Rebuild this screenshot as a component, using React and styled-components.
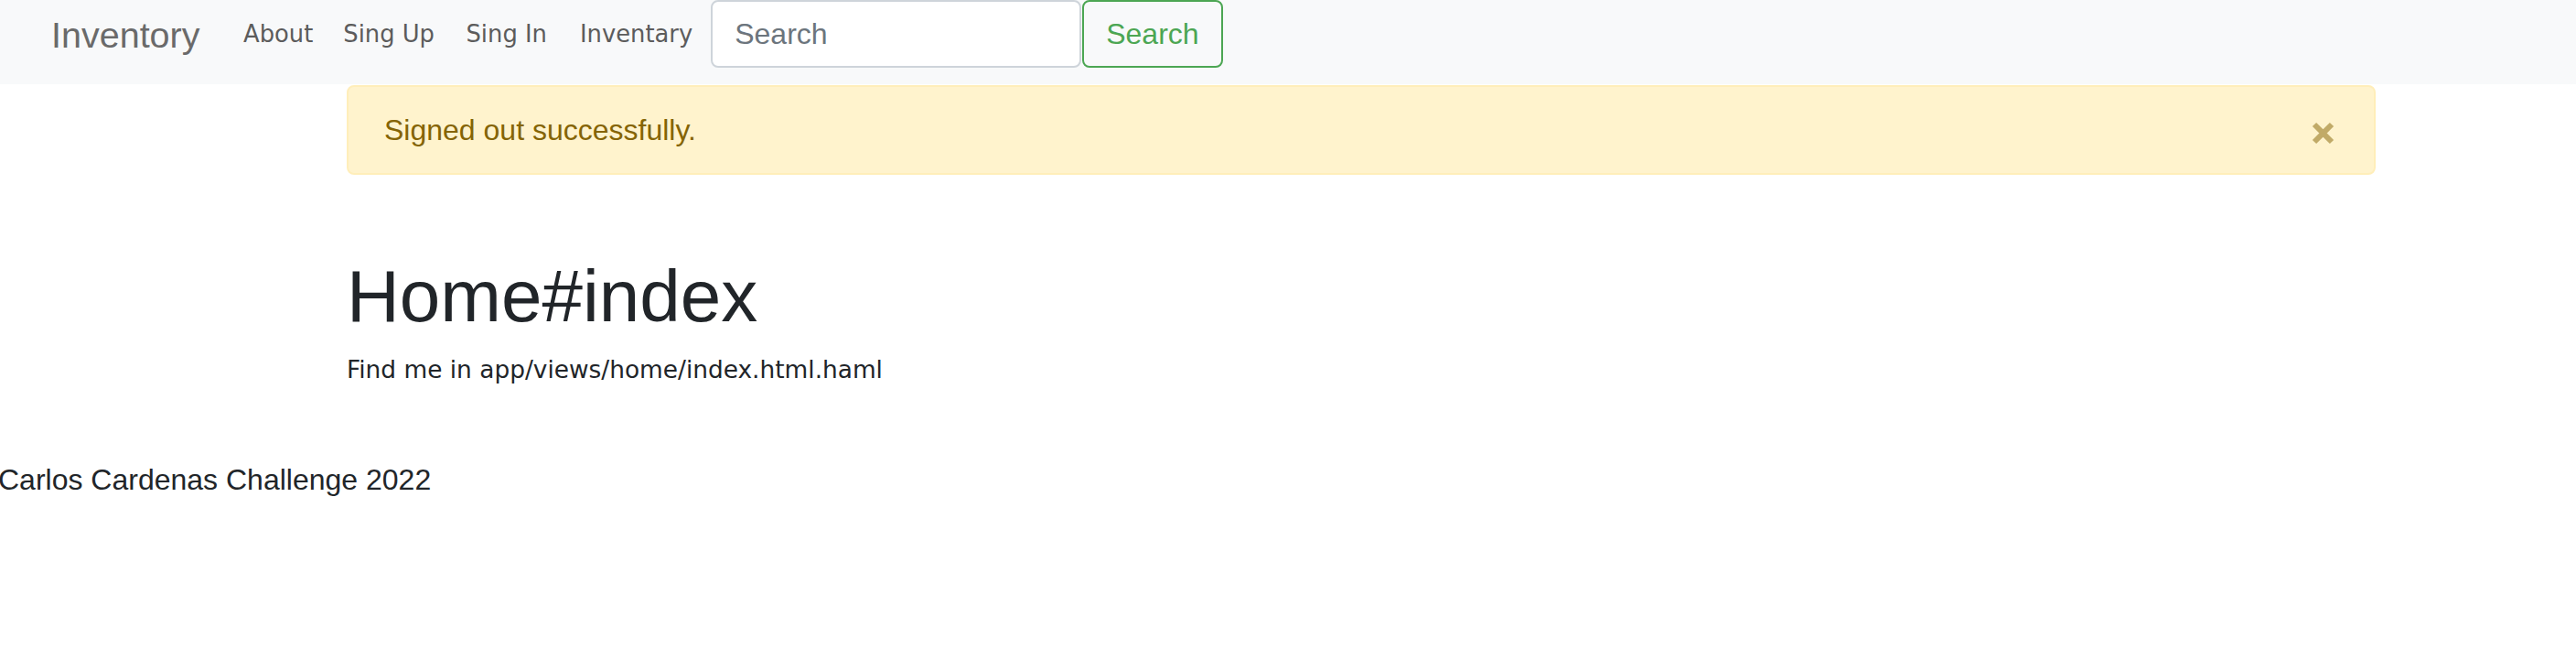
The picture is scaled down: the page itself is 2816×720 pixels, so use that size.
import styled, { createGlobalStyle } from "styled-components";

const GlobalStyle = createGlobalStyle`
  body {
    margin: 0;
    background: #fff;
    font-family: "Liberation Sans", Arial, sans-serif;
    color: #212529;
  }
`;

const Navbar = styled.nav`
  display: flex;
  align-items: flex-start;
  height: 92px;
  padding-left: 56px;
  background-color: #f8f9fa;
  box-sizing: border-box;
`;

const Brand = styled.a`
  margin-top: 15px;
  margin-right: 31px;
  font-size: 39.5px;
  line-height: 46px;
  color: #6a6a6a;
  text-decoration: none;
`;

const NavList = styled.ul`
  display: flex;
  margin: 0;
  padding: 0;
  list-style: none;
`;

/* the reference font has a wider capital I than DejaVu, so those links get a bit more room */
const NavLink = styled.a`
  display: block;
  margin-top: 22px;
  padding: 0 ${(p) => (p.$wide ? "18px" : "16.5px")};
  font-family: "DejaVu Sans", Verdana, sans-serif;
  font-size: 25.8px;
  line-height: 30px;
  color: #5c5c5c;
  text-decoration: none;
`;

const SearchForm = styled.form`
  display: flex;
  margin-left: 2px;
`;

const SearchInput = styled.input`
  width: 405px;
  height: 74px;
  padding: 0 24px;
  box-sizing: border-box;
  border: 2px solid #ced4da;
  border-radius: 8px;
  background: #fff;
  font-family: "Liberation Sans", Arial, sans-serif;
  font-size: 32px;
  color: #495057;
  outline: none;

  &::placeholder {
    color: #6c757d;
  }
`;

const SearchButton = styled.button`
  height: 74px;
  margin-left: 1px;
  padding: 0 24px;
  box-sizing: border-box;
  border: 2px solid #4ca653;
  border-radius: 8px;
  background: transparent;
  font-family: "Liberation Sans", Arial, sans-serif;
  font-size: 32px;
  color: #4ca653;
`;

const Main = styled.main`
  width: 2218px;
  margin-left: 379px;
`;

const Alert = styled.div`
  display: flex;
  align-items: center;
  justify-content: space-between;
  height: 98px;
  margin-top: 1px;
  padding: 0 42px 0 39px;
  box-sizing: border-box;
  border: 2px solid #ffeeba;
  border-radius: 8px;
  background-color: #fff3cd;
  color: #856404;
  font-size: 32px;
  line-height: 48px;
`;

const CloseButton = styled.button`
  display: flex;
  margin-top: 6px;
  padding: 0;
  border: 0;
  background: transparent;
  color: #856404;
  opacity: 0.5;
`;

const Title = styled.h1`
  margin: 85px 0 0;
  font-size: 80px;
  font-weight: 500;
  line-height: 96px;
  color: #212529;
`;

const Note = styled.p`
  margin: 12px 0 0;
  font-family: "DejaVu Sans", Verdana, sans-serif;
  font-size: 26.4px;
  line-height: 39px;
  color: #212529;
`;

const Footer = styled.footer`
  margin-top: 77px;
  margin-left: -2px;
  font-size: 32px;
  line-height: 48px;
  color: #212529;
`;

const links = [
  { label: "About" },
  { label: "Sing Up" },
  { label: "Sing In", wide: true },
  { label: "Inventary", wide: true },
];

export default function App() {
  return (
    <>
      <GlobalStyle />
      <Navbar>
        <Brand href="#">Inventory</Brand>
        <NavList>
          {links.map((item) => (
            <li key={item.label}>
              <NavLink href="#" $wide={item.wide}>
                {item.label}
              </NavLink>
            </li>
          ))}
        </NavList>
        <SearchForm onSubmit={(e) => e.preventDefault()}>
          <SearchInput type="search" placeholder="Search" />
          <SearchButton type="submit">Search</SearchButton>
        </SearchForm>
      </Navbar>

      <Main>
        <Alert>
          <span>Signed out successfully.</span>
          <CloseButton aria-label="Close">
            <svg width="27" height="27" viewBox="0 0 27 27">
              <path
                d="M4 4 L23 23 M23 4 L4 23"
                stroke="currentColor"
                strokeWidth="6"
                strokeLinecap="butt"
              />
            </svg>
          </CloseButton>
        </Alert>
        <Title>Home#index</Title>
        <Note>Find me in app/views/home/index.html.haml</Note>
      </Main>

      <Footer>Carlos Cardenas Challenge 2022</Footer>
    </>
  );
}
